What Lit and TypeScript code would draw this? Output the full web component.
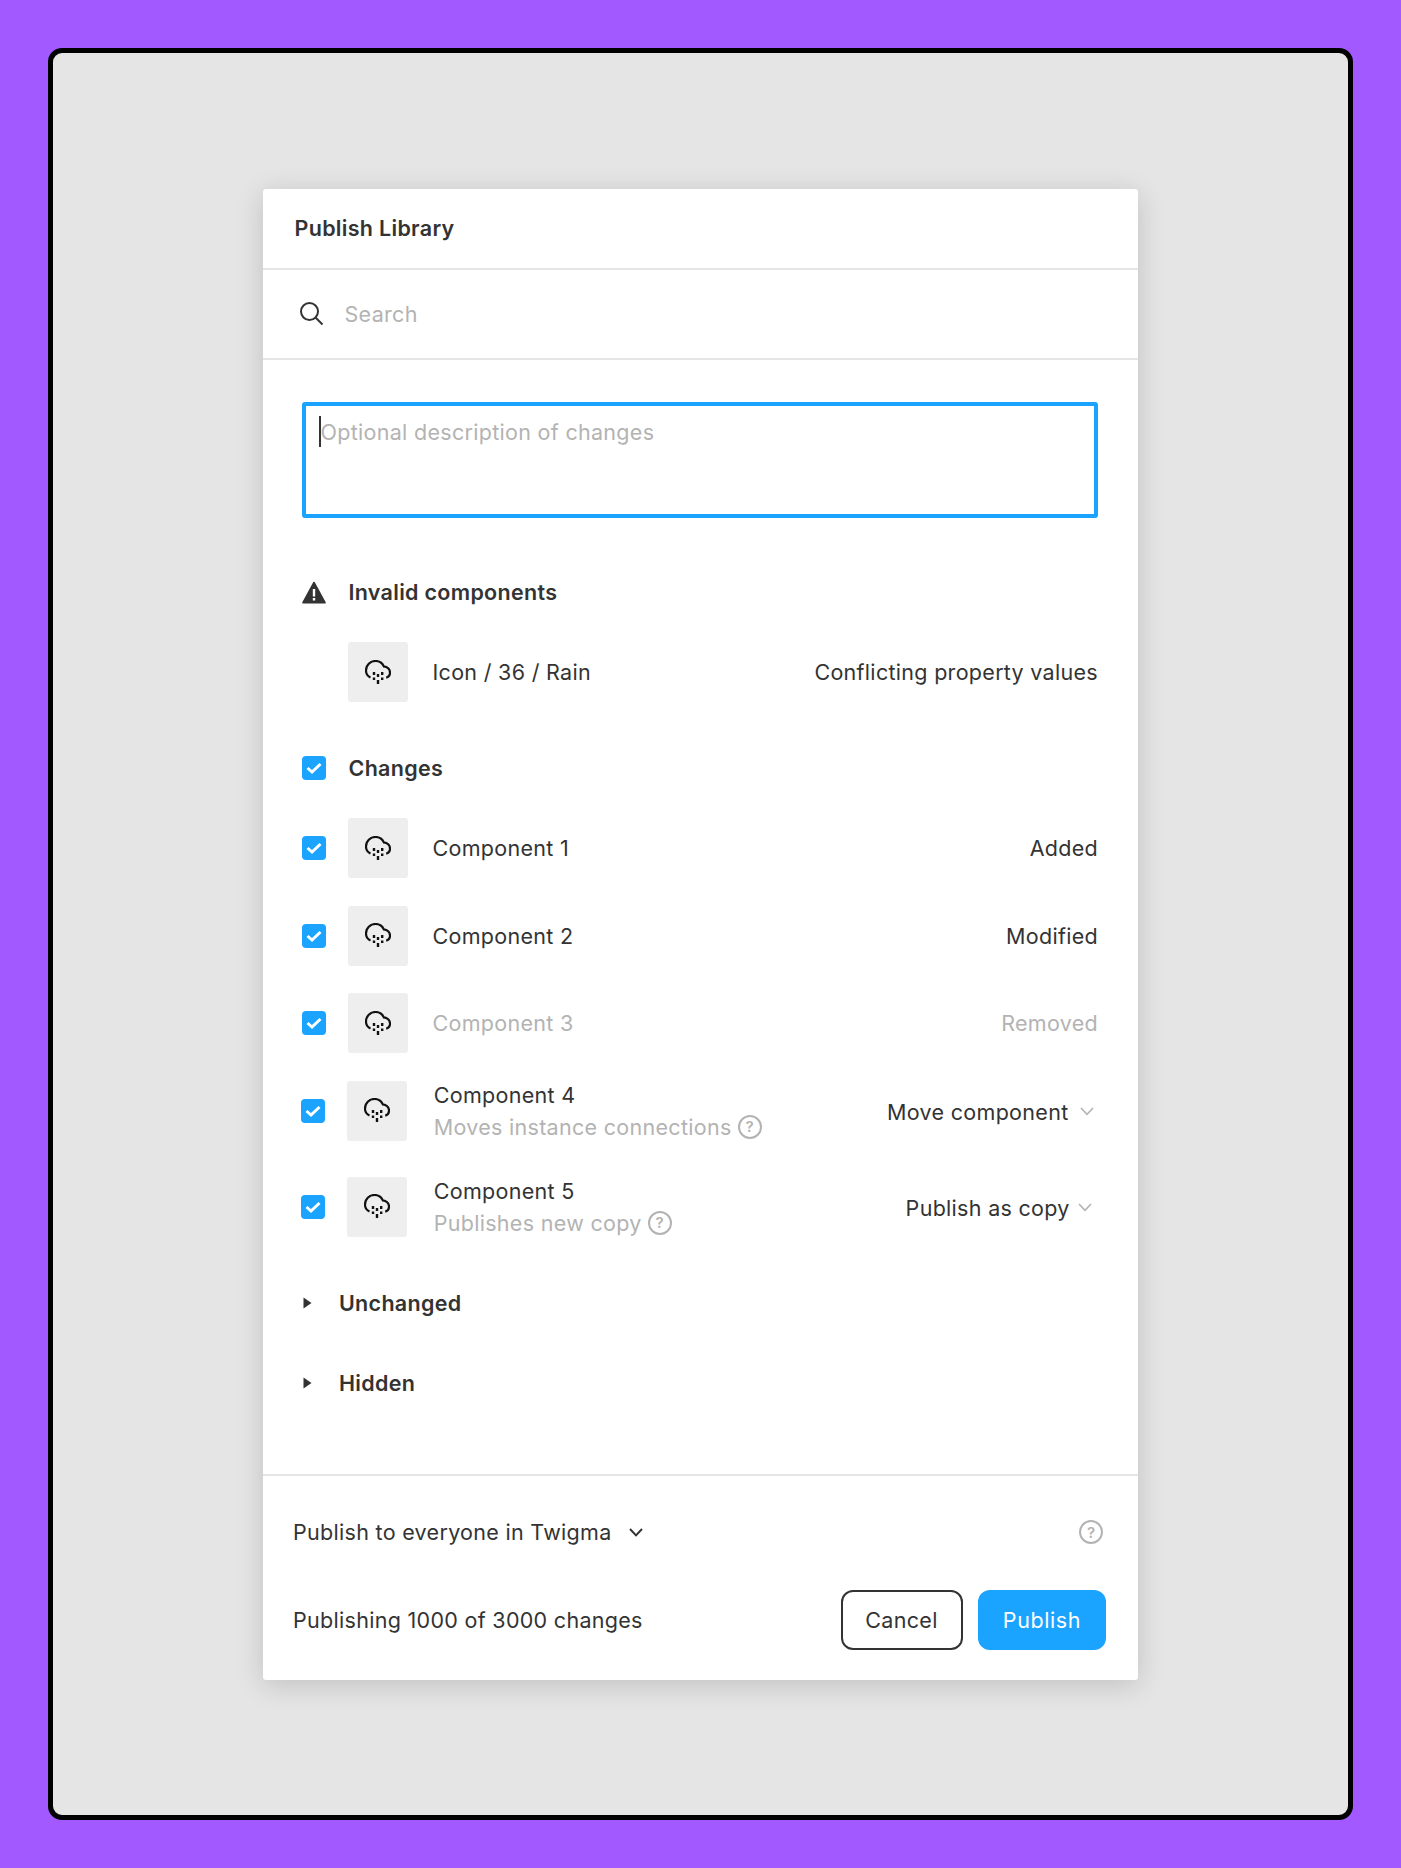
import {LitElement, html, css, svg} from 'lit';
import {customElement} from 'lit/decorators.js';

const cloud = html`<svg class="cloud" width="26" height="25" viewBox="0 0 26 25" fill="none" stroke="#111">
    <path stroke-width="2.2" d="M5.5 17.5C2.8 16.3 1 13.7 1 10.5C1 5.3 5.2 1 10.5 1C14.2 1 17.4 3.2 18.8 6.4C22.2 6.6 25 9.2 25 12.6C25 15 23.4 17 21.2 17.6"/>
    <path stroke-width="2.4" d="M9 12v3M9 17.5v2.5M13 14v3M13 20v4M17.2 12v3M17.2 17.5v2.5"/>
</svg>`;

const check = html`<span class="check"><svg width="24" height="24" viewBox="0 0 24 24" fill="none">
    <path d="M5.5 12L10 16L18.5 8" stroke="#fff" stroke-width="3"/>
</svg></span>`;

const help = html`<span class="help">?</span>`;

const chevron = (color: string, width: number) => html`<svg class="chev" width="14" height="9" viewBox="0 0 14 9" fill="none">
    ${svg`<path d="M1 1L7 7.4L13 1" stroke=${color} stroke-width=${width}/>`}
</svg>`;

const caret = html`<svg class="caret" width="9" height="12" viewBox="0 0 9 12"><path d="M0.5 0.5L8.5 6L0.5 11.5Z" fill="#333"/></svg>`;

@customElement('app-root')
export default class AppRoot extends LitElement {
    static styles = css`
        :host {
            display: block;
            padding: 48px;
            background: #a259ff;
            font-family: Inter, 'Liberation Sans', sans-serif;
            font-size: 21.5px;
            letter-spacing: 0.3px;
            color: #333;
        }
        .frame {
            height: 1772px;
            box-sizing: border-box;
            border: 5px solid #000;
            border-radius: 14px;
            background: #e5e5e5;
            padding-left: 210px;
            display: flex;
            align-items: center;
        }
        .dialog {
            width: 874.5px;
            height: 1491px;
            background: #fff;
            border-radius: 3px;
            box-shadow: 0 5px 28px rgba(0, 0, 0, 0.16);
            display: flex;
            flex-direction: column;
        }
        .title {
            height: 81px;
            box-sizing: border-box;
            border-bottom: 2px solid #e5e5e5;
            padding-left: 31.5px;
            display: flex;
            align-items: center;
            font-weight: 600;
        }
        .search {
            height: 90px;
            box-sizing: border-box;
            border-bottom: 2px solid #e5e5e5;
            padding-left: 37px;
            display: flex;
            align-items: center;
            gap: 20.5px;
            color: #b3b3b3;
        }
        .body {
            flex: 1;
            padding: 42.5px 39.5px 0 39px;
            display: flex;
            flex-direction: column;
        }
        .area {
            height: 116px;
            box-sizing: border-box;
            border: 4px solid #1aa3ff;
            border-radius: 3px;
            padding: 10px 0 0 12.5px;
            display: flex;
            color: #b3b3b3;
        }
        .cursor {
            width: 2px;
            height: 31px;
            background: #333;
        }
        .area span {
            line-height: 33px;
        }
        .head {
            height: 48px;
            display: flex;
            align-items: center;
            gap: 22.5px;
            font-weight: 600;
        }
        .invalid { margin-top: 50px; }
        .changes { margin-top: 42px; }
        .unchanged { margin-top: 42px; gap: 27px; padding-left: 1px; }
        .hidden { margin-top: 32px; gap: 27px; padding-left: 1px; }
        .row {
            height: 60px;
            margin-top: 27.5px;
            display: flex;
            align-items: center;
            gap: 22px;
        }
        .row.first { margin-top: 26px; }
        .row.bare { padding-left: 46px; }
        .row.double { margin-left: -1px; }
        .row.double + .row.double { margin-top: 36px; }
        .row.double .name { margin-left: 4.7px; }
        .thumb {
            width: 60px;
            height: 60px;
            flex: none;
            background: #eee;
            border-radius: 3px;
            display: flex;
            align-items: center;
            justify-content: center;
        }
        .name {
            flex: 1;
            margin-left: 2.5px;
        }
        .name div { line-height: 32px; }
        .sub {
            color: #b3b3b3;
            display: flex;
            align-items: center;
            gap: 6px;
        }
        .muted { color: #b3b3b3; }
        .check {
            width: 24px;
            height: 24px;
            flex: none;
            background: #1aa3ff;
            border-radius: 4px;
        }
        .check svg, .chev, .caret { display: block; }
        .help {
            width: 24px;
            height: 24px;
            box-sizing: border-box;
            flex: none;
            border: 2px solid #b3b3b3;
            border-radius: 50%;
            display: flex;
            align-items: center;
            justify-content: center;
            font-size: 15px;
            font-weight: 600;
            letter-spacing: 0;
            color: #b3b3b3;
        }
        .menu {
            display: flex;
            align-items: center;
            gap: 11.5px;
            padding: 2px 4px 0 0;
        }
        .menu.copy {
            gap: 8.3px;
            padding-right: 6px;
        }
        .footer {
            height: 206px;
            box-sizing: border-box;
            border-top: 2px solid #e5e5e5;
            padding: 38.5px 31.5px 29.5px 30px;
            display: flex;
            flex-direction: column;
            gap: 40px;
        }
        .line {
            display: flex;
            align-items: center;
            justify-content: space-between;
        }
        .share {
            height: 36px;
            padding-right: 3px;
        }
        .share div {
            display: flex;
            align-items: center;
            gap: 17px;
        }
        .buttons {
            display: flex;
            gap: 15.5px;
        }
        .btn {
            height: 60px;
            box-sizing: border-box;
            border-radius: 12px;
            display: flex;
            align-items: center;
            justify-content: center;
        }
        .cancel {
            width: 122px;
            border: 2px solid #333;
        }
        .publish {
            width: 128px;
            background: #1aa3ff;
            color: #fff;
            letter-spacing: 0.6px;
        }
    `

    row(name: string, status: string, muted = false) {
        return html`
        <div class="row">
            ${check}
            <div class="thumb">${cloud}</div>
            <div class="name ${muted ? 'muted' : ''}">${name}</div>
            <div class="${muted ? 'muted' : ''}">${status}</div>
        </div>`
    }

    rowDouble(name: string, sub: string, menu: string, cls: string) {
        return html`
        <div class="row double">
            ${check}
            <div class="thumb">${cloud}</div>
            <div class="name">
                <div>${name}</div>
                <div class="sub">${sub} ${help}</div>
            </div>
            <div class="menu ${cls}">${menu} ${chevron('#b3b3b3', 1.6)}</div>
        </div>`
    }

    render() {
        return html`
        <div class="frame">
            <div class="dialog">
                <div class="title">Publish Library</div>
                <div class="search">
                    <svg width="24" height="24" viewBox="0 0 24 24" fill="none" stroke="#333" stroke-width="2">
                        <circle cx="9.5" cy="9.5" r="8.5"/>
                        <path d="M15.5 15.5L22.5 22.5"/>
                    </svg>
                    <span>Search</span>
                </div>
                <div class="body">
                    <div class="area"><div class="cursor"></div><span>Optional description of changes</span></div>

                    <div class="head invalid">
                        <svg width="24" height="23" viewBox="0 0 24 23">
                            <path d="M12 1.5L23 21.7H1Z" fill="#333" stroke="#333" stroke-width="1.6" stroke-linejoin="round"/>
                            <path d="M10.8 8h2.4v7.5h-2.4zM10.8 17h2.4v2.6h-2.4z" fill="#fff"/>
                        </svg>
                        Invalid components
                    </div>
                    <div class="row first bare">
                        <div class="thumb">${cloud}</div>
                        <div class="name">Icon / 36 / Rain</div>
                        <div>Conflicting property values</div>
                    </div>

                    <div class="head changes">${check} Changes</div>
                    <div class="row first">
                        ${check}
                        <div class="thumb">${cloud}</div>
                        <div class="name">Component 1</div>
                        <div>Added</div>
                    </div>
                    ${this.row('Component 2', 'Modified')}
                    ${this.row('Component 3', 'Removed', true)}
                    ${this.rowDouble('Component 4', 'Moves instance connections', 'Move component', '')}
                    ${this.rowDouble('Component 5', 'Publishes new copy', 'Publish as copy', 'copy')}

                    <div class="head unchanged">${caret} Unchanged</div>
                    <div class="head hidden">${caret} Hidden</div>
                </div>
                <div class="footer">
                    <div class="line share">
                        <div>Publish to everyone in Twigma ${chevron('#333', 2)}</div>
                        ${help}
                    </div>
                    <div class="line">
                        <span>Publishing 1000 of 3000 changes</span>
                        <div class="buttons">
                            <div class="btn cancel">Cancel</div>
                            <div class="btn publish">Publish</div>
                        </div>
                    </div>
                </div>
            </div>
        </div>
        `
    }
}
